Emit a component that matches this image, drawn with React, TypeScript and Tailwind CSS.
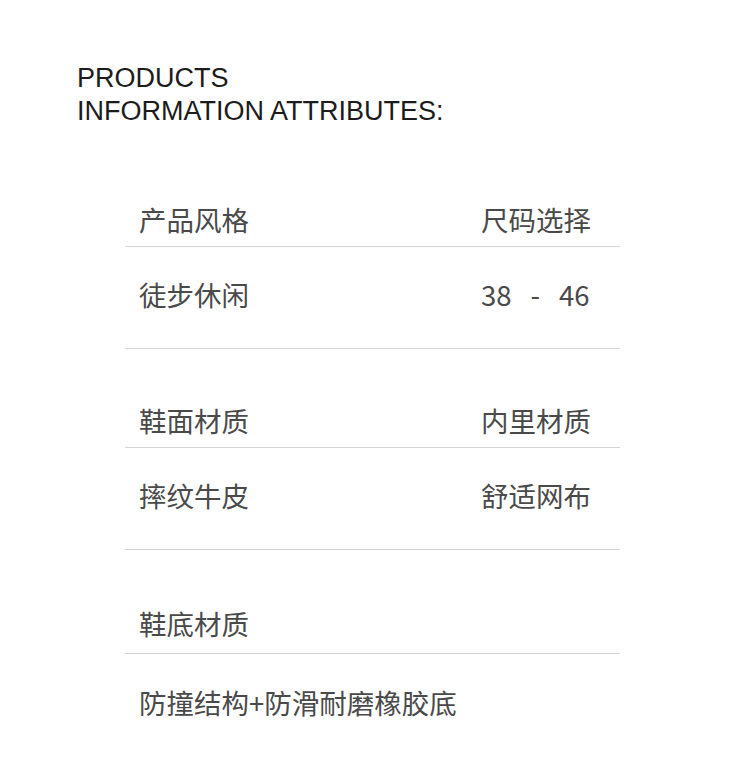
import React from 'react';

const cjk = "font-['Noto_Sans_CJK_SC',sans-serif]";

type Row = { label: string; right?: string; value: string; rightValue?: React.ReactNode };

const rows: Row[] = [
  {
    label: '产品风格',
    right: '尺码选择',
    value: '徒步休闲',
    rightValue: (
      <span className="flex gap-[19px]">
        <span>38</span>
        <span>-</span>
        <span>46</span>
      </span>
    ),
  },
  { label: '鞋面材质', right: '内里材质', value: '摔纹牛皮', rightValue: '舒适网布' },
  { label: '鞋底材质', value: '防撞结构+防滑耐磨橡胶底' },
];

const App: React.FC = () => {
  return (
    <div className="w-[750px] h-[770px] bg-white overflow-hidden">
      {/* Heading */}
      <div className="pt-[62px] pl-[77px] font-['Liberation_Sans',Arial,sans-serif] text-[27px] leading-[33px] text-[#1c1c1c]">
        <p>PRODUCTS</p>
        <p>INFORMATION ATTRIBUTES:</p>
      </div>

      {/* Attribute table */}
      <div className={`ml-[125px] w-[495px] pt-[20px] ${cjk} text-[27.5px] leading-[28px] text-[#4a4a4a]`}>
        {rows.map((row, i) => {
          const last = i === rows.length - 1;
          return (
            <div key={row.label}>
              <div
                className={`flex pl-[14px] border-b border-[#d4d4d4] ${
                  last ? 'pt-[59px] pb-[16px]' : 'pt-[57px] pb-[13px]'
                }`}
              >
                <span className="w-[342px]">{row.label}</span>
                {row.right && <span>{row.right}</span>}
              </div>
              <div
                className={`flex pl-[14px] ${
                  last ? 'pt-[34px] pb-[20px]' : 'pt-[33px] pb-[40px] border-b border-[#d4d4d4]'
                }`}
              >
                <span className="w-[342px] whitespace-nowrap">{row.value}</span>
                {row.rightValue && <span>{row.rightValue}</span>}
              </div>
            </div>
          );
        })}
      </div>
    </div>
  );
};

export default App;
